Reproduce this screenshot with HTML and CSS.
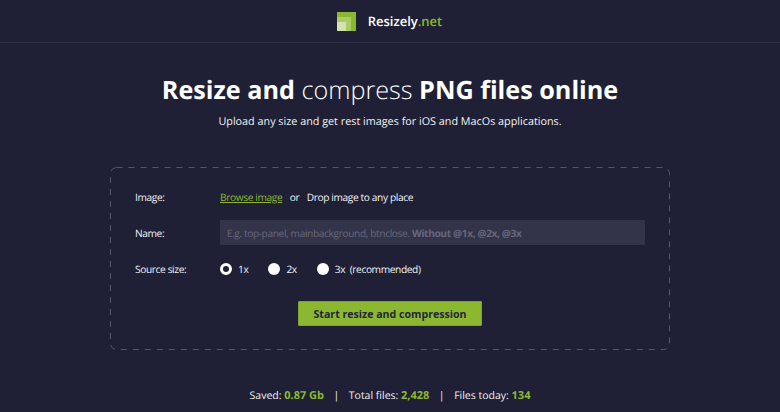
FILE: index.html
```html
<!DOCTYPE html>
<html lang="en">
<head>
    <meta charset="UTF-8">
    <title>Resizely.net</title>
    <link rel="stylesheet" href="styles.css">
</head>
<body>
    <div class="topbar">
        <svg class="logo" width="19" height="19" viewBox="0 0 19 19">
            <rect width="19" height="19" fill="#8cb82f"/>
            <rect y="5" width="14" height="14" fill="#a9cb68"/>
            <rect y="10" width="9" height="9" fill="#d3e3ad"/>
        </svg>
        <div class="brand">Resizely<span class="green">.net</span></div>
    </div>
    <div class="hero">
        <h1>Resize and <span class="thin">compress</span> PNG files online</h1>
        <p>Upload any size and get rest images for iOS and MacOs applications.</p>
    </div>
    <div class="formbox">
        <svg class="dashes" width="560" height="183" viewBox="0 0 560 183">
            <rect x="0.5" y="0.5" width="559" height="182" rx="6" fill="none" stroke="#55566c" stroke-dasharray="6 6"/>
        </svg>
        <div class="row">
            <div class="label">Image:</div>
            <div class="value">
                <a href="#" class="browse">Browse image</a>
                <span class="or">or</span>
                <span>Drop image to any place</span>
            </div>
        </div>
        <div class="row">
            <div class="label">Name:</div>
            <div class="namefield">E.g. top-panel, mainbackground, btnclose. <b>Without @1x, @2x, @3x</b></div>
        </div>
        <div class="row">
            <div class="label">Source size:</div>
            <div class="value">
                <span class="radio checked"></span><span class="radiotext">1x</span>
                <span class="radio"></span><span class="radiotext">2x</span>
                <span class="radio"></span><span class="radiotext">3x &nbsp;(recommended)</span>
            </div>
        </div>
        <div class="btnrow">
            <button class="startbtn">Start resize and compression</button>
        </div>
    </div>
    <div class="stats">
        Saved:&nbsp;<b>0.87 Gb</b><span class="sep">|</span>Total files: <b>2,428</b><span class="sep">|</span>Files today: <b>134</b>
    </div>
</body>
</html>
```

FILE: styles.css
```css
*{
    margin:0;
    padding:0;
    box-sizing:border-box;
}
body{
    background-color:#1f2036;
    color:#f2f2f2;
    font-family:"Open Sans",sans-serif;
    height:412px;
    overflow:hidden;
    text-rendering:geometricPrecision;
}
.green{
    color:#8cb82f;
}
.topbar{
    height:43px;
    border-bottom:1px solid #2e2f45;
    display:flex;
    align-items:center;
    justify-content:center;
    padding-right:1px;
}
.logo{
    margin-right:12px;
    margin-top:1px;
}
.brand{
    font-size:13px;
    font-weight:600;
    color:#fff;
}
.hero{
    text-align:center;
    padding-top:28px;
}
.hero h1{
    font-size:25.2px;
    line-height:38px;
    font-weight:700;
    color:#fff;
}
.hero .thin{
    font-weight:300;
}
.hero p{
    font-size:10.8px;
    line-height:18px;
    margin-top:4px;
}
.formbox{
    position:relative;
    width:560px;
    height:183px;
    margin:36px auto 0;
    padding:17px 25px 0;
    font-size:10.2px;
    letter-spacing:-0.39px;
}
.dashes{
    position:absolute;
    top:0;
    left:0;
}
.row{
    display:flex;
    align-items:center;
    height:25px;
    margin-bottom:11px;
}
.label{
    width:85px;
    margin-top:1px;
}
.value{
    display:flex;
    align-items:center;
    margin-top:1px;
}
.browse{
    color:#8cb82f;
}
.or{
    margin:0 7.5px;
}
.namefield{
    width:427px;
    height:25px;
    line-height:26px;
    background-color:#33344a;
    padding-left:7px;
    color:#66677b;
}
.radio{
    width:12px;
    height:12px;
    border-radius:50%;
    background-color:#fff;
    margin-right:6px;
}
.radio.checked{
    background-color:#1f2036;
    border:3px solid #fff;
}
.radiotext{
    margin-right:20px;
}
.btnrow{
    text-align:center;
    margin-top:20px;
}
.startbtn{
    width:184px;
    height:25px;
    background-color:#8cb82f;
    border:1px solid #7ca32a;
    border-radius:1px;
    color:#23263a;
    font-family:"Open Sans",sans-serif;
    font-size:10.6px;
    font-weight:700;
}
.stats{
    text-align:center;
    font-size:10.5px;
    margin-top:38px;
}
.stats b{
    color:#8cb82f;
    font-size:11px;
}
.sep{
    margin:0 9.5px;
}
```
